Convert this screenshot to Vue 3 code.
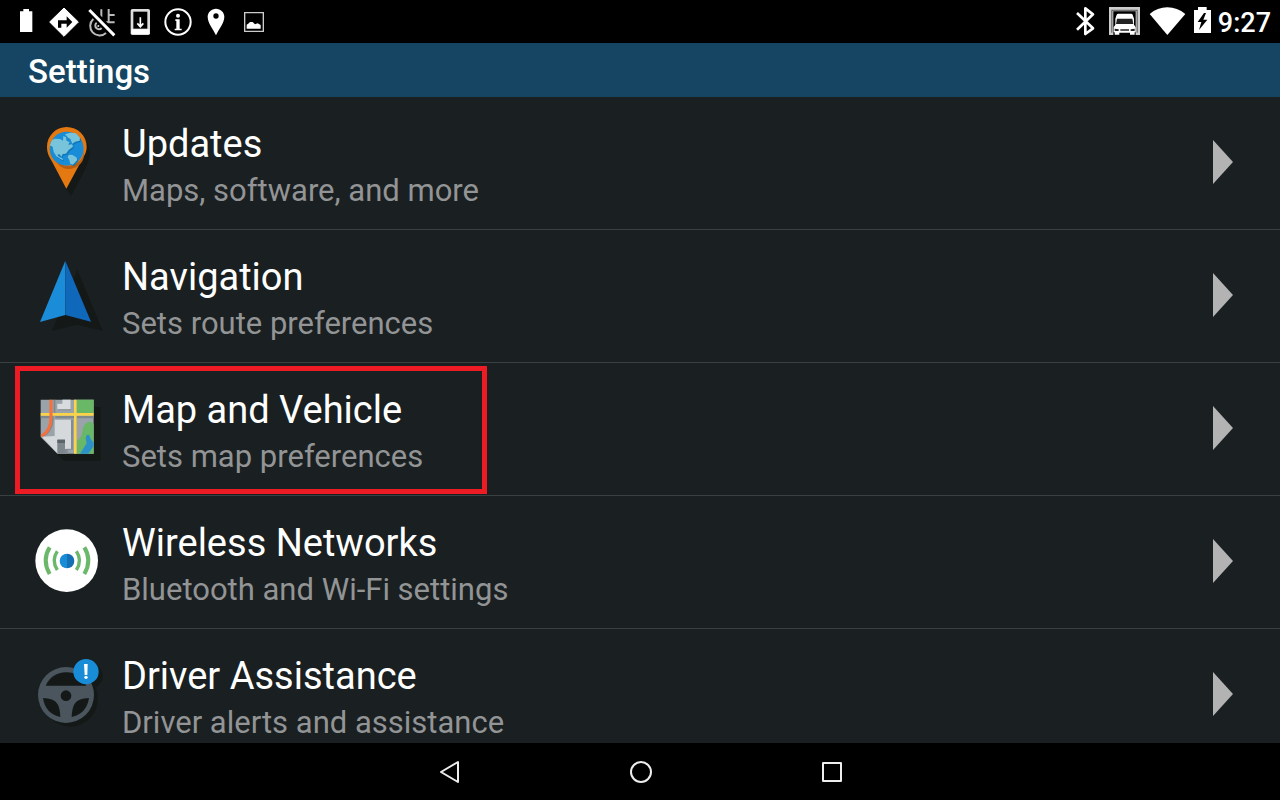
<template>
  <div class="screen">
    <!-- Status bar -->
    <div class="status-bar">
      <div class="status-left">
        <svg class="status-icon" viewBox="21 0 114 129" aria-hidden="true">
          <path d="M60 34h10v-7h17v7h10v62H60z" fill="#fff" />
        </svg>
        <svg class="status-icon" viewBox="135 0 114 129" aria-hidden="true">
          <path d="M192 24l43 42-43 43-43-43z" fill="#fff" stroke="#fff" stroke-width="3" stroke-linejoin="round" />
          <path d="M174 83V61h26V49l17 17-17 17V71h-16v12z" fill="#000" />
        </svg>
        <svg class="status-icon" viewBox="249 0 114 129" aria-hidden="true">
          <g fill="none" stroke="#bbb" stroke-width="6">
            <path d="M280 57a27 27 0 1 0 38 42M304 28v24M326 27v42M328 45h16M318 67h26" />
            <path d="M290 68a11 11 0 1 0 15 16" />
          </g>
          <circle cx="295" cy="78" r="3" fill="#ddd" />
          <path d="M274 25l73 76" stroke="#000" stroke-width="10" />
          <path d="M268 30l75 76" stroke="#fff" stroke-width="9" />
        </svg>
        <svg class="status-icon" viewBox="363 0 114 129" aria-hidden="true">
          <path d="M397 27h48q5 0 5 5v68q0 5-5 5h-48q-5 0-5-5V32q0-5 5-5z" fill="#ddd" />
          <path d="M400 35h42v51h-42z" fill="#000" />
          <path d="M394 88h54v14h-54z" fill="#fff" />
          <path d="M421 52v24M412 70l9 10 9-10" fill="none" stroke="#fff" stroke-width="5" />
        </svg>
        <svg class="status-icon" viewBox="477 0 114 129" aria-hidden="true">
          <circle cx="534" cy="66" r="38" fill="none" stroke="#fff" stroke-width="6" />
          <circle cx="534" cy="47" r="6" fill="#fff" />
          <path d="M526 58h13v28h6v5h-21v-5h5V63h-3z" fill="#fff" />
        </svg>
        <svg class="status-icon" viewBox="591 0 114 129" aria-hidden="true">
          <path d="M648 26c-14 0-25 11-25 24 0 19 16 36 25 56 9-20 25-37 25-56 0-13-11-24-25-24z" fill="#fff" />
          <circle cx="648" cy="48" r="8" fill="#000" />
        </svg>
        <svg class="status-icon" viewBox="705 0 114 129" aria-hidden="true">
          <path d="M734 38h56v56h-56z" fill="none" stroke="#ccc" stroke-width="4" />
          <path d="M740 86V74q6-3 10-8h8l7 7 8-3 9 5v11z" fill="#fff" />
        </svg>
      </div>
      <div class="status-right">
        <svg class="bluetooth" viewBox="45 0 60 129" aria-hidden="true">
          <path d="M51 39l48 46-23 17V25l23 18-48 46" fill="none" stroke="#fff" stroke-width="8" stroke-linejoin="round" />
        </svg>
        <svg class="truck" viewBox="147 0 93 129" aria-hidden="true">
          <path d="M147 21h93v84h-13V34h-67v71h-13z" fill="#ccc" />
          <path d="M154 29h79v69h-3V32h-73v66h-3z" fill="#555" />
          <path d="M166 56l4-12q1-3 5-3h38q4 0 5 3l4 12v18l5 8v15h-3v7h-14v-6h-32v6h-14v-7h-3V82l5-8z" fill="#fff" />
          <path d="M171 56h46l3 16h-52z" fill="#222" />
          <path d="M164 86l12 2v5h-12zM224 86l-12 2v5h12zM181 88h26v4h-26z" fill="#222" />
        </svg>
        <svg class="wifi" viewBox="267 0 111 129" aria-hidden="true">
          <path d="M322 105L269 42q23-20 53-20t54 20z" fill="#fff" />
        </svg>
        <svg class="charging" viewBox="399 0 57 129" aria-hidden="true">
          <path d="M402 30h12v-9h26v9h13v69h-51z" fill="#fff" />
          <path d="M432 39l-19 27h11l-7 24 25-31h-12l8-20z" fill="#000" />
        </svg>
        <span class="clock">9:27</span>
      </div>
    </div>

    <!-- Title bar -->
    <header class="title-bar">
      <h1>Settings</h1>
    </header>

    <!-- Settings list -->
    <main class="settings">
      <ul class="settings-list">
        <li v-for="item in items" :key="item.id" class="settings-item">
          <button type="button" class="settings-row">
            <svg v-if="item.id === 'updates'" class="row-icon" viewBox="0 9 270 270" aria-hidden="true">
              <path d="M148 57a59 59 0 0 1 45 73c-9 33-35 76-54 113l-18-24z" fill="#141918" />
              <path d="M125 36a59 59 0 0 0-59 60c0 20 8 32 17 47l41 78 42-78c10-17 19-30 19-47a60 60 0 0 0-60-60z" fill="#e47911" />
              <path d="M93 139c14 28 56 34 79 0 5-8 5-22 5-29-4 30-29 45-56 43z" fill="#b85f13" />
              <circle cx="125" cy="101" r="51" fill="#198cd7" />
              <path d="M81 75l9-4 15 1 9 5 1-14 8 4 2 10 9 5-4 7 11-1 3 7-13 10-8 11-10 1-3 8-7-7-6 1 6 8 9 3 2 6-9-5-11-7-8-13-3-15-9-5zM120 58l16-5 17 2 12 13-1 9-13 3-9 6-6-14-7-4zM131 120l10-1 13 8 3 8-13 14-8-2-3-12-5-8z" fill="#1275b5" transform="translate(3 4)" />
              <path d="M81 75l9-4 15 1 9 5 1-14 8 4 2 10 9 5-4 7 11-1 3 7-13 10-8 11-10 1-3 8-7-7-6 1 6 8 9 3 2 6-9-5-11-7-8-13-3-15-9-5zM120 58l16-5 17 2 12 13-1 9-13 3-9 6-6-14-7-4zM131 120l10-1 13 8 3 8-13 14-8-2-3-12-5-8z" fill="#78c4da" />
            </svg>

            <svg v-else-if="item.id === 'navigation'" class="row-icon" viewBox="0 9 270 270" aria-hidden="true">
              <path d="M157 66l77 183-77-19-77 19z" fill="#141918" />
              <path d="M121 38v163l-76 21z" fill="#1a8cd8" />
              <path d="M121 38l77 183-77-20z" fill="#1068ba" />
            </svg>

            <svg v-else-if="item.id === 'map'" class="row-icon" viewBox="0 0 270 270" aria-hidden="true">
              <path d="M207 69h20v161H115l-21-21h113z" fill="#141918" />
              <path d="M47 47h159v162H97l-50-50z" fill="#9aa3a9" />
              <path d="M52 160q34-16 34-62V47h5v56h56v106h8V103h51v-7h-51V47h-8v49H47v7h32q-4 35-32 50z" fill="#7f888d" />
              <path d="M113 47h25v32H99V59h14z" fill="#7f888d" />
              <path d="M112 47h25v29H97V59h15z" fill="#d8dcde" />
              <path d="M156 47h50v40h-50z" fill="#69b868" />
              <path d="M50 158l39-2v-49h49v87h-14v14H97z" fill="#d5d9db" />
              <path d="M138 107h6v90h-16v12h-9v-14h19z" fill="#838c91" />
              <path d="M97 167h23v42H97z" fill="#7c868b" />
              <path d="M97 167h23v10H97z" fill="#5a646a" />
              <path d="M156 209v-37l13-15 6-28q7-15 18-16 10 0 13 8v88z" fill="#69b868" />
              <path d="M165 209l20-31-3-15q1-10 7-11 5 0 8 13l9 12v9l-16 23z" fill="#2c90c9" />
              <path d="M47 87h159v8H47zM147 47h8v162h-8z" fill="#fbd34b" />
              <path d="M78 47v51q0 43-29 58" fill="none" stroke="#f96f3b" stroke-width="9" />
            </svg>

            <svg v-else-if="item.id === 'wireless'" class="row-icon" viewBox="0 6 270 270" aria-hidden="true">
              <circle cx="125" cy="137" r="94" fill="#fff" />
              <g fill="none" stroke="#6bb86b" stroke-width="12">
                <path d="M74 97q-24 38 0 80M178 97q24 38 0 80" />
                <path d="M97 109q-19 27 0 56M154 109q19 27 0 56" stroke-width="10" />
              </g>
              <path d="M126 116a22 22 0 0 0 0 44z" fill="#198cd8" />
              <path d="M126 116a22 22 0 0 1 0 44z" fill="#1270b3" />
            </svg>

            <svg v-else class="row-icon" viewBox="0 6 270 270" aria-hidden="true">
              <circle cx="136" cy="153" r="83" fill="#141918" />
              <circle cx="195" cy="84" r="38" fill="#141918" />
              <path fill-rule="evenodd" d="M123 57a84 84 0 1 0 0 168 84 84 0 0 0 0-168zM62 113q18-39 61-40t61 40zM54 150q32 1 43 17 8 12 9 40-45-10-52-57zM192 150q-32 1-43 17-8 12-9 40 45-10 52-57zM123 127a16 16 0 1 0 0 32 16 16 0 0 0 0-32z" fill="#4a555d" />
              <circle cx="183" cy="71" r="38" fill="#198cd7" />
              <path d="M177 48h11l-1 33h-8z" fill="#fff" />
              <circle cx="183" cy="88" r="5" fill="#fff" />
            </svg>

            <span class="row-text">
              <span class="row-title">{{ item.title }}</span>
              <span class="row-summary">{{ item.summary }}</span>
            </span>
            <svg class="row-arrow" viewBox="0 0 20 44" aria-hidden="true">
              <path d="M0 0l20 22L0 44z" fill="#b3b3b3" />
            </svg>
          </button>
          <span v-if="item.highlighted" class="highlight"></span>
        </li>
      </ul>
    </main>

    <!-- System navigation -->
    <nav class="nav-bar">
      <button type="button" class="nav-btn" aria-label="Back">
        <svg viewBox="0 0 24 24">
          <path d="M20 2v20L3 12z" />
        </svg>
      </button>
      <button type="button" class="nav-btn" aria-label="Home">
        <svg viewBox="0 0 24 24">
          <circle cx="12" cy="12" r="10" />
        </svg>
      </button>
      <button type="button" class="nav-btn" aria-label="Recent apps">
        <svg viewBox="0 0 24 24">
          <path d="M3 3h18v18H3z" />
        </svg>
      </button>
    </nav>
  </div>
</template>

<script setup>
import { ref } from 'vue'

const items = ref([
  { id: 'updates', title: 'Updates', summary: 'Maps, software, and more' },
  { id: 'navigation', title: 'Navigation', summary: 'Sets route preferences' },
  { id: 'map', title: 'Map and Vehicle', summary: 'Sets map preferences', highlighted: true },
  { id: 'wireless', title: 'Wireless Networks', summary: 'Bluetooth and Wi-Fi settings' },
  { id: 'driver', title: 'Driver Assistance', summary: 'Driver alerts and assistance' }
])
</script>

<style>
body {
  margin: 0;
  background: #000;
}
</style>

<style scoped>
.screen {
  display: flex;
  flex-direction: column;
  height: 100vh;
  background: #1a1f21;
  color: #fff;
  font-family: Roboto, 'Liberation Sans', sans-serif;
}

.status-bar {
  display: flex;
  flex: none;
  justify-content: space-between;
  height: 43px;
  padding: 0 9px 0 7px;
  background: #000;
}

.status-left,
.status-right {
  display: flex;
  align-items: center;
}

.status-bar svg {
  height: 43px;
}

.status-icon {
  width: 38px;
}

.bluetooth {
  width: 20px;
  margin-right: 14px;
}

.truck {
  width: 31px;
  margin-right: 9px;
}

.wifi {
  width: 37px;
  margin-right: 7px;
}

.charging {
  width: 19px;
  margin-right: 6px;
}

.clock {
  padding-top: 4px;
  font-size: 27px;
  font-weight: 500;
  line-height: 39px;
}

.title-bar {
  flex: none;
  padding: 0 28px;
  background: #154562;
}

.title-bar h1 {
  margin: 0;
  padding-top: 4px;
  font-size: 33px;
  font-weight: 500;
  line-height: 50px;
}

.settings {
  flex: 1;
  min-height: 0;
  overflow: hidden;
}

.settings-list {
  margin: 0;
  padding: 0;
  list-style: none;
}

.settings-item {
  position: relative;
  border-bottom: 1px solid #3a3f42;
}

.settings-row {
  display: flex;
  align-items: center;
  width: 100%;
  height: 132px;
  padding: 0 47px 0 25px;
  border: none;
  background: none;
  color: inherit;
  font-family: inherit;
  text-align: left;
}

.row-icon {
  flex: none;
  width: 90px;
  height: 90px;
  margin-right: 7px;
}

.row-text {
  display: flex;
  flex: 1;
  flex-direction: column;
  padding-top: 6px;
}

.row-title {
  font-size: 38px;
  line-height: 50px;
}

.row-summary {
  color: #929495;
  font-size: 31px;
  line-height: 44px;
}

.row-arrow {
  flex: none;
  width: 20px;
  height: 44px;
  margin-bottom: 2px;
}

.highlight {
  position: absolute;
  top: 3px;
  left: 15px;
  box-sizing: border-box;
  width: 472px;
  height: 128px;
  border: 5px solid #ed1c24;
  pointer-events: none;
}

.nav-bar {
  display: flex;
  flex: none;
  justify-content: center;
  height: 57px;
  padding-left: 2px;
  background: #000;
}

.nav-btn {
  display: flex;
  align-items: center;
  justify-content: center;
  width: 191px;
  padding: 0;
  border: none;
  background: none;
}

.nav-btn svg {
  width: 24px;
  height: 24px;
  fill: none;
  stroke: #eee;
  stroke-width: 2;
  stroke-linejoin: round;
}
</style>
